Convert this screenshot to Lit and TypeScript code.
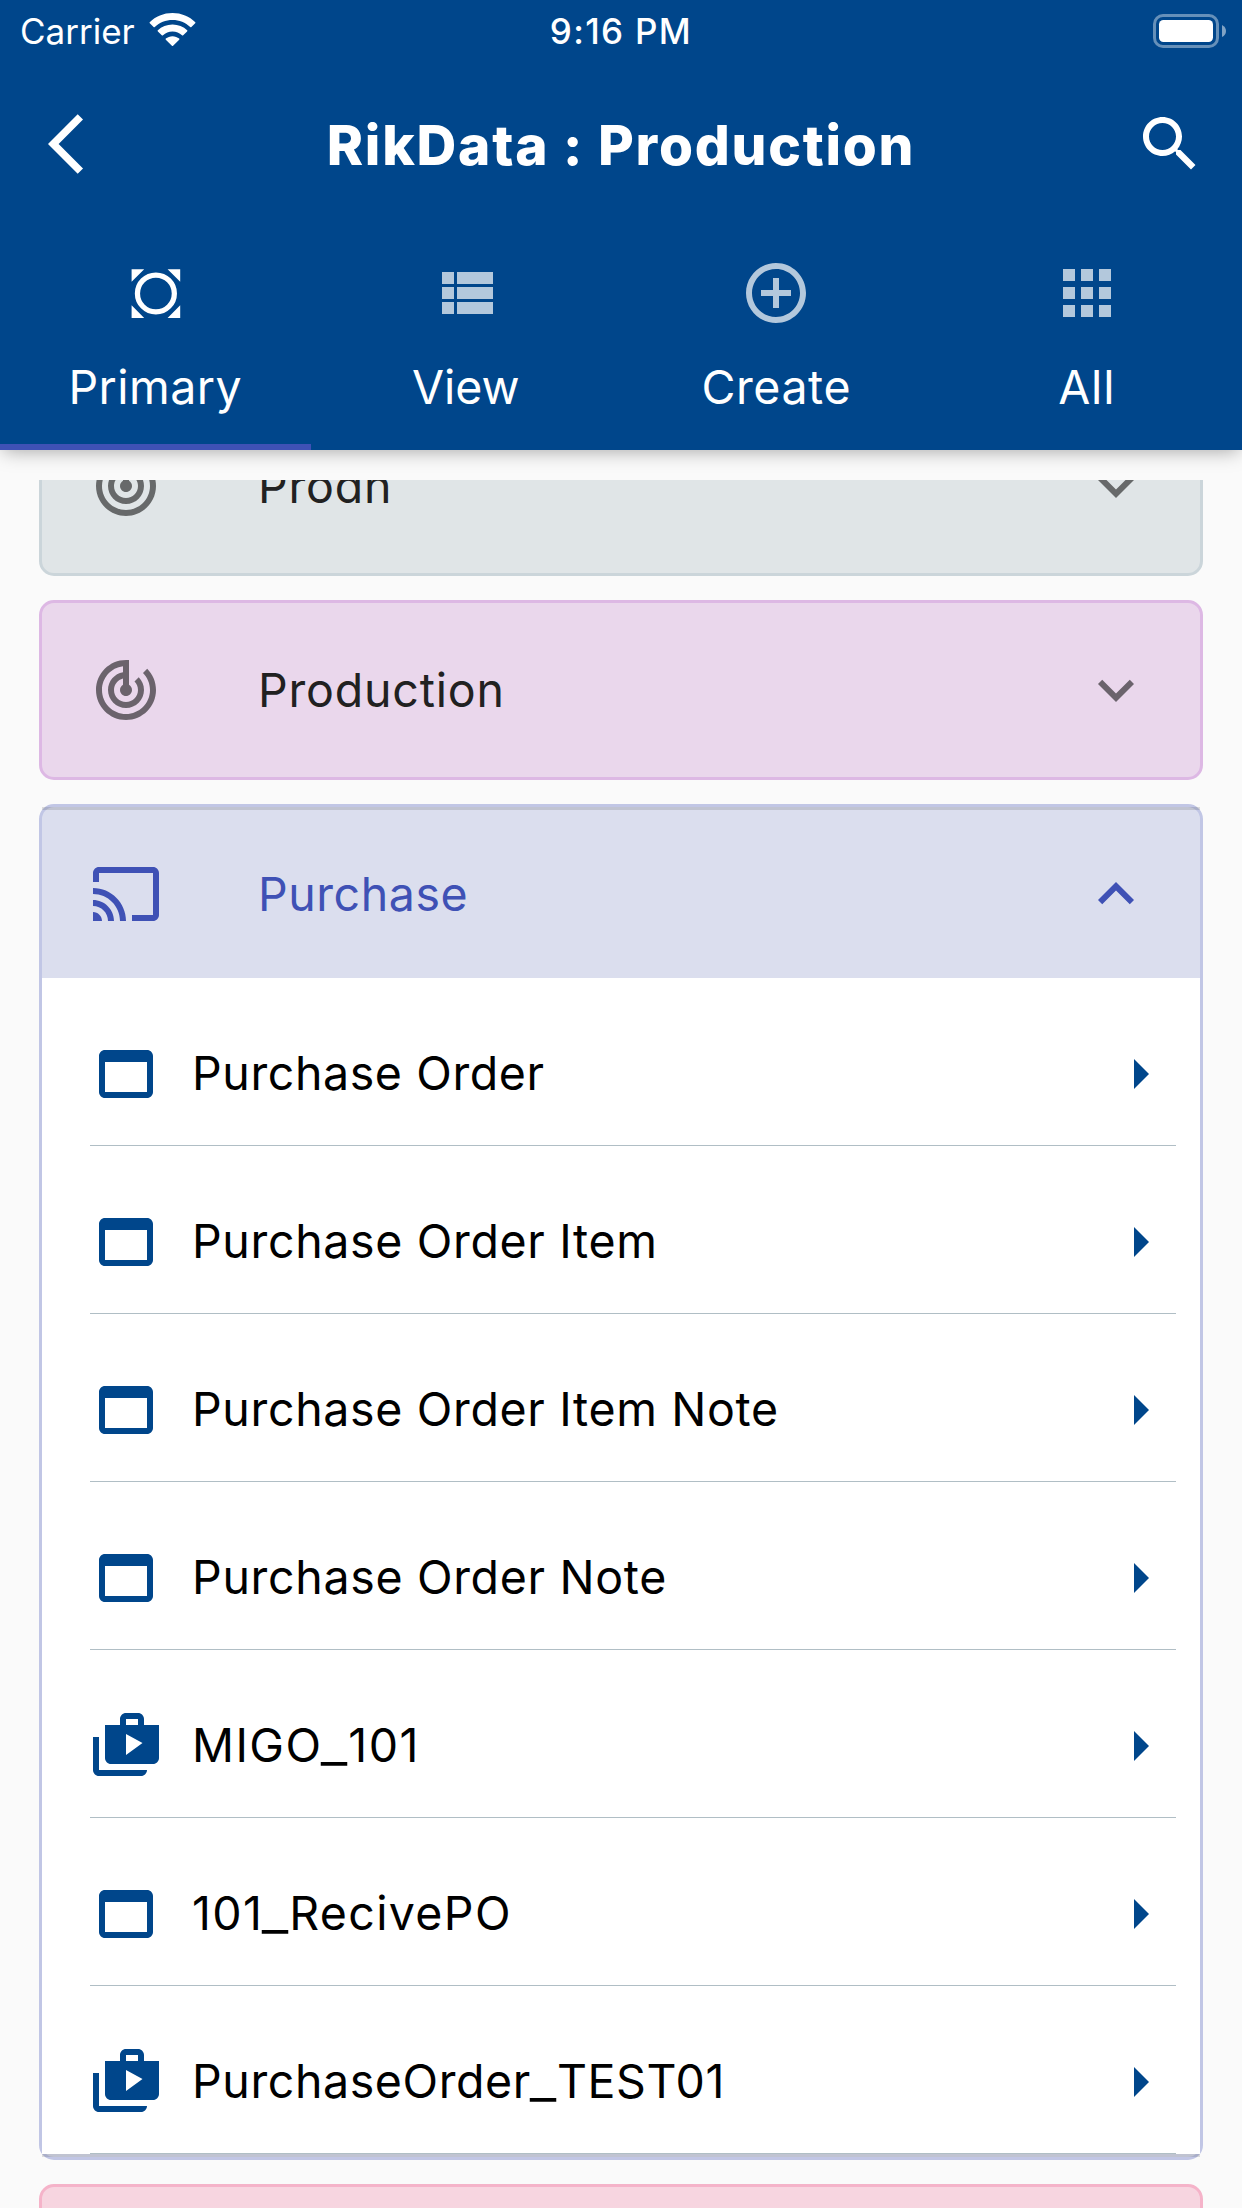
import { LitElement, html, css, svg } from "lit";
import { customElement, property } from "lit/decorators.js";
import { classMap } from "lit/directives/class-map.js";
import { styleMap } from "lit/directives/style-map.js";

const ICONS: Record<string, unknown> = {
  back: svg`<path d="M11.67 3.87L9.9 2.1 0 12l9.9 9.9 1.77-1.77L3.54 12z"/>`,
  search: svg`<path d="M15.5 14h-.79l-.28-.27C15.41 12.59 16 11.11 16 9.5 16 5.91 13.09 3 9.5 3S3 5.91 3 9.5 5.91 16 9.5 16c1.61 0 3.09-.59 4.23-1.57l.27.28v.79l5 4.99L20.49 19l-4.99-5zm-6 0C7.01 14 5 11.99 5 9.5S7.01 5 9.5 5 14 7.01 14 9.5 11.99 14 9.5 14z"/>`,
  primary: svg`<circle cx="12.3" cy="12.15" r="6.15" fill="none" stroke="currentColor" stroke-width="1.75"/><path d="M4.2 4.05h4.2l-4.2 4.2zM20.4 4.05v4.2l-4.2-4.2zM4.2 20.3v-4.2l4.2 4.2zM20.4 20.3h-4.2l4.2-4.2z"/>`,
  view: svg`<path d="M4 14h4v-4H4v4zm0 5h4v-4H4v4zM4 9h4V5H4v4zm5 5h12v-4H9v4zm0 5h12v-4H9v4zM9 5v4h12V5H9z"/>`,
  create: svg`<path d="M13 7h-2v4H7v2h4v4h2v-4h4v-2h-4V7zm-1-5C6.48 2 2 6.48 2 12s4.48 10 10 10 10-4.48 10-10S17.52 2 12 2zm0 18c-4.41 0-8-3.59-8-8s3.59-8 8-8 8 3.59 8 8-3.59 8-8 8z"/>`,
  all: svg`<path d="M4 8h4V4H4v4zm6 12h4v-4h-4v4zm-6 0h4v-4H4v4zm0-6h4v-4H4v4zm6 0h4v-4h-4v4zm6-10v4h4V4h-4zm-6 4h4V4h-4v4zm6 6h4v-4h-4v4zm0 6h4v-4h-4v4z"/>`,
  track: svg`<path d="M19.07 4.93l-1.41 1.41C19.1 7.79 20 9.79 20 12c0 4.42-3.58 8-8 8s-8-3.58-8-8c0-4.08 3.05-7.44 7-7.93v2.02C8.16 6.57 6 9.03 6 12c0 3.31 2.69 6 6 6s6-2.69 6-6c0-1.66-.67-3.16-1.76-4.24l-1.41 1.41C15.55 9.9 16 10.9 16 12c0 2.21-1.79 4-4 4s-4-1.79-4-4c0-1.86 1.28-3.41 3-3.86v2.14c-.6.35-1 .98-1 1.72 0 1.1.9 2 2 2s2-.9 2-2c0-.74-.4-1.38-1-1.72V2h-1C6.48 2 2 6.48 2 12s4.48 10 10 10 10-4.48 10-10c0-2.76-1.12-5.26-2.93-7.07z"/>`,
  cast: svg`<path d="M21 3H3c-1.1 0-2 .9-2 2v3h2V5h18v14h-7v2h7c1.1 0 2-.9 2-2V5c0-1.1-.9-2-2-2zM1 18v3h3c0-1.66-1.34-3-3-3zm0-4v2c2.76 0 5 2.24 5 5h2c0-3.87-3.13-7-7-7zm0-4v2c4.97 0 9 4.03 9 9h2c0-6.08-4.93-11-11-11z"/>`,
  more: svg`<path d="M16.59 8.59L12 13.17 7.41 8.59 6 10l6 6 6-6z"/>`,
  less: svg`<path d="M12 8l-6 6 1.41 1.41L12 10.83l4.59 4.58L18 14z"/>`,
  window: svg`<path d="M19 4H5c-1.11 0-2 .9-2 2v12c0 1.1.89 2 2 2h14c1.1 0 2-.9 2-2V6c0-1.1-.89-2-2-2zm0 14H5V8h14v10z"/>`,
  play: svg`<path d="M3 9H1v11c0 1.11.89 2 2 2h14c1.11 0 2-.89 2-2H3V9zm15-4V3c0-1.11-.89-2-2-2h-4c-1.11 0-2 .89-2 2v2H5v11c0 1.11.89 2 2 2h14c1.11 0 2-.89 2-2V5h-5zm-6-2h4v2h-4V3zm0 12V8l5.5 3-5.5 4z"/>`,
  arrow: svg`<path d="M10 17l5-5-5-5v10z"/>`,
};

@customElement("md-icon")
class MdIcon extends LitElement {
  static styles = css`
    :host { display: block; flex: none; width: 72px; height: 72px; }
    .glyph { display: block; width: 100%; height: 100%; fill: currentColor; }
  `;
  @property() name = "";
  render() {
    return html`<svg class="glyph" viewBox="0 0 24 24">${ICONS[this.name]}</svg>`;
  }
}

interface Entry { label: string; icon: string; tracking: number }

const TABS: Entry[] = [
  { label: "Primary", icon: "primary", tracking: 0.46 },
  { label: "View", icon: "view", tracking: 0 },
  { label: "Create", icon: "create", tracking: 0.57 },
  { label: "All", icon: "all", tracking: 0.83 },
];

const ITEMS: Entry[] = [
  { label: "Purchase Order", icon: "window", tracking: 0.6 },
  { label: "Purchase Order Item", icon: "window", tracking: 0.66 },
  { label: "Purchase Order Item Note", icon: "window", tracking: 0.66 },
  { label: "Purchase Order Note", icon: "window", tracking: 0.68 },
  { label: "MIGO_101", icon: "play", tracking: 1.4 },
  { label: "101_RecivePO", icon: "window", tracking: 1.35 },
  { label: "PurchaseOrder_TEST01", icon: "play", tracking: 0.6 },
];

@customElement("app-root")
class AppRoot extends LitElement {
  static styles = css`
    :host {
      display: block;
      width: 1242px;
      height: 2208px;
      overflow: hidden;
      background: #fafafa;
      font-family: Inter, "Noto Sans", sans-serif;
      font-size: 46.5px;
      line-height: 60px;
    }
    .page { display: flex; flex-direction: column; height: 100%; }
    .header {
      flex: none;
      height: 450px;
      background: #00468b;
      color: #fff;
      box-shadow: 0 4px 18px -3px rgba(0, 0, 0, 0.34);
    }
    .status {
      display: grid;
      grid-template-columns: 1fr auto 1fr;
      align-items: center;
      height: 60px;
      padding: 0 16px 0 20px;
      box-sizing: border-box;
      font-size: 35px;
    }
    .carrier { display: flex; align-items: center; gap: 14px; padding-top: 1px; }
    .wifi { display: block; width: 47px; height: 34px; margin-top: -3px; fill: #fff; }
    .clock { font-weight: 500; letter-spacing: 1.33px; padding: 1px 4px 0 0; }
    .battery { justify-self: end; display: block; width: 73px; height: 34px; }
    .toolbar {
      display: grid;
      grid-template-columns: 72px 1fr 72px;
      align-items: center;
      height: 168px;
      padding: 0 36px 0 48px;
      box-sizing: border-box;
    }
    .title {
      margin: 0 0 0 -12px;
      padding-top: 1px;
      text-align: center;
      font-size: 55px;
      font-weight: 800;
      letter-spacing: 1.75px;
    }
    .tabs { display: grid; grid-template-columns: repeat(4, 1fr); height: 222px; }
    .tab {
      display: flex;
      flex-direction: column;
      align-items: center;
      gap: 28px;
      padding-top: 29px;
      box-sizing: border-box;
      border-bottom: 6px solid transparent;
    }
    .tab.active { border-bottom-color: #3f51b5; }
    .tab-icon { opacity: 0.7; }
    .tab.active .tab-icon { opacity: 1; }
    .list {
      flex: 1;
      min-height: 0;
      margin-top: 30px;
      padding: 0 39px;
      overflow: hidden;
      display: flex;
      flex-direction: column;
      gap: 24px;
    }
    .card {
      flex: none;
      box-sizing: border-box;
      border: 3px solid;
      border-radius: 15px;
      color: #212121;
    }
    .card.grey { margin-top: -84px; background: #e0e5e7; border-color: #cbd5da; }
    .card.purple { background: #ead7ec; border-color: #ddb8e4; }
    .card.indigo { background: #dbdeee; border-color: #c1c6e5; color: #3f51b5; }
    .card.pink { height: 180px; background: #f7d5e0; border-color: #f5b3c9; }
    .head { display: flex; align-items: center; height: 174px; padding: 0 48px; }
    .head.open { height: 168px; }
    .head-icon { color: rgba(0, 0, 0, 0.54); }
    .open .head-icon { color: #3f51b5; }
    .head-label { flex: 1; margin-left: 96px; letter-spacing: 0.8px; }
    .open .head-label { letter-spacing: 0.55px; }
    .rule { height: 3px; background: rgba(0, 0, 0, 0.12); }
    .rows { background: #fff; }
    .row {
      display: flex;
      align-items: center;
      height: 168px;
      box-sizing: border-box;
      margin: 0 24px 0 48px;
      padding-top: 25px;
      border-bottom: 1px solid #b0bec5;
      color: #00468b;
    }
    .row-label { flex: 1; margin-left: 30px; padding-bottom: 2px; color: #000; }
    .low-line {
      display: inline-block;
      width: 26px;
      letter-spacing: 0;
      text-align: center;
      transform: translateX(-1px) scaleX(1.25);
    }
    .head, .row { white-space: nowrap; }
  `;

  private head(label: string, icon: string, open = false) {
    return html`
      <div class=${classMap({ head: true, open })}>
        <md-icon class="head-icon" name=${icon}></md-icon>
        <span class="head-label">${label}</span>
        <md-icon class="head-icon" name=${open ? "less" : "more"}></md-icon>
      </div>`;
  }

  /* Underscores are drawn a little wider than the font's own. */
  private text(label: string) {
    return label.split("_").map((part, i) =>
      i === 0 ? html`${part}` : html`<span class="low-line">_</span>${part}`);
  }

  render() {
    return html`
      <div class="page">
        <header class="header">
          <div class="status">
            <div class="carrier">
              <span>Carrier</span>
              <svg class="wifi" viewBox="0 0 47 34">
                <path d="M23.5 0C32.4 0 40.4 3.4 46.3 9.2Q46.7 9.8 46.2 10.3L42.4 14Q41.8 14.4 41.2 13.9C36.5 9.4 30.3 6.9 23.5 6.9S10.5 9.4 5.8 13.9Q5.2 14.4 4.6 14L.8 10.3Q.3 9.8.7 9.2C6.6 3.4 14.6 0 23.5 0z"/>
                <path d="M23.5 11.5C29.2 11.5 34.3 13.7 38.2 17.3Q38.7 17.9 38.1 18.5L34.2 22.3Q33.6 22.7 33 22.2C30.5 19.9 27.2 18.5 23.5 18.5S16.5 19.9 14 22.2Q13.4 22.7 12.8 22.3L8.9 18.5Q8.3 17.9 8.8 17.3C12.7 13.7 17.8 11.5 23.5 11.5z"/>
                <path d="M23.5 23.2C26 23.2 28.4 24.1 30.2 25.6Q30.7 26.2 30.2 26.7L24.1 32.8Q23.5 33.3 22.9 32.8L16.8 26.7Q16.3 26.2 16.8 25.6C18.6 24.1 21 23.2 23.5 23.2z"/>
              </svg>
            </div>
            <div class="clock">9:16 PM</div>
            <svg class="battery" viewBox="0 0 73 34">
              <rect x="1.5" y="1.5" width="63" height="31" rx="8.5" fill="none" stroke="#fff" stroke-opacity=".4" stroke-width="3"/>
              <rect x="6" y="6" width="54" height="22" rx="4.5" fill="#fff"/>
              <path d="M69 11Q73 13 73 17T69 23z" fill="#fff" fill-opacity=".5"/>
            </svg>
          </div>
          <div class="toolbar">
            <md-icon name="back"></md-icon>
            <h1 class="title">RikData : Production</h1>
            <md-icon name="search"></md-icon>
          </div>
          <nav class="tabs">
            ${TABS.map((t, i) => html`
              <div class=${classMap({ tab: true, active: i === 0 })}>
                <md-icon class="tab-icon" name=${t.icon}></md-icon>
                <span style=${styleMap({ letterSpacing: `${t.tracking}px` })}>${t.label}</span>
              </div>`)}
          </nav>
        </header>
        <main class="list">
          <section class="card grey">${this.head("Prodn", "track")}</section>
          <section class="card purple">${this.head("Production", "track")}</section>
          <section class="card indigo">
            <div class="rule"></div>
            ${this.head("Purchase", "cast", true)}
            <div class="rows">
              ${ITEMS.map((r) => html`
                <div class="row">
                  <md-icon name=${r.icon}></md-icon>
                  <span class="row-label" style=${styleMap({ letterSpacing: `${r.tracking}px` })}>${this.text(r.label)}</span>
                  <md-icon name="arrow"></md-icon>
                </div>`)}
            </div>
            <div class="rule"></div>
          </section>
          <section class="card pink"></section>
        </main>
      </div>`;
  }
}
